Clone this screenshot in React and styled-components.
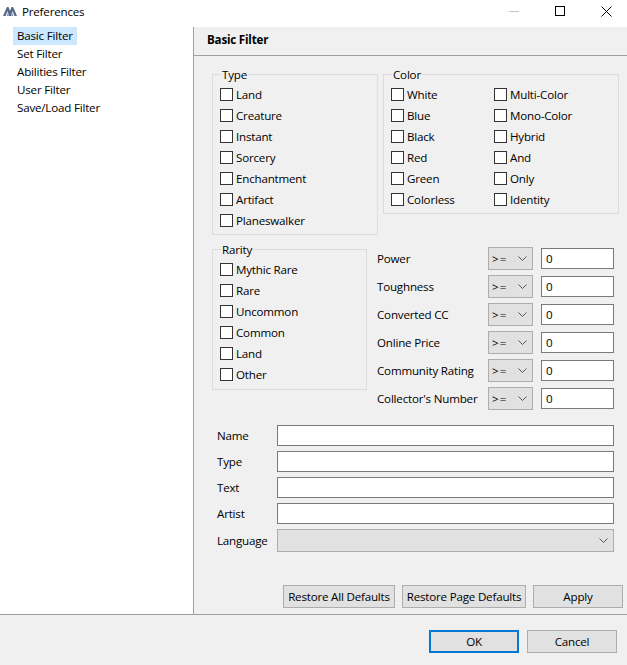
import React from "react";
import styled, { createGlobalStyle } from "styled-components";

const GlobalStyle = createGlobalStyle`
  html, body {
    margin: 0;
    padding: 0;
    background: #f0f0f0;
    overflow: hidden;
  }
  * {
    box-sizing: border-box;
  }
  body, input {
    font-family: "Open Sans", "Noto Sans", sans-serif;
    font-size: 11.6px;
    letter-spacing: -0.2px;
    color: #000;
  }
`;

const Window = styled.div`
  width: 627px;
  height: 665px;
  display: flex;
  flex-direction: column;
  overflow: hidden;
`;

const TitleBar = styled.div`
  height: 27px;
  flex: none;
  background: #fff;
  display: flex;
  align-items: flex-start;
  padding-left: 3px;
`;

const TitleText = styled.span`
  margin-left: 5px;
  line-height: 24px;
`;

const Logo = styled.svg`
  width: 14px;
  height: 9px;
  margin-top: 7px;
`;

const WindowControls = styled.div`
  margin-left: auto;
  margin-right: -2px;
  display: flex;
`;

const WindowButton = styled.div`
  width: 46px;
  height: 22px;
  display: flex;
  align-items: center;
  justify-content: center;
`;

const Main = styled.div`
  flex: 1;
  display: flex;
  min-height: 0;
`;

const Sidebar = styled.div`
  width: 194px;
  flex: none;
  background: #fff;
  border-right: 1px solid #a0a0a0;
  padding: 0 0 0 13px;
`;

const NavItem = styled.div`
  width: ${(p) => (p.$selected ? "64px" : "auto")};
  height: 18px;
  line-height: 17px;
  padding-left: 4px;
  background: ${(p) => (p.$selected ? "#cce8ff" : "transparent")};
  white-space: nowrap;
`;

const Panel = styled.div`
  flex: 1;
  display: flex;
  flex-direction: column;
  min-width: 0;
`;

const PanelTitle = styled.div`
  height: 29px;
  flex: none;
  border-bottom: 1px solid #a0a0a0;
  padding-left: 13px;
  font-weight: 700;
  line-height: 26px;
`;

const PanelBody = styled.div`
  flex: 1;
  padding: 9px 0 0 18px;
  display: flex;
  flex-direction: column;
`;

const TopRow = styled.div`
  display: flex;
  gap: 5px;
`;

const MiddleRow = styled.div`
  display: flex;
  gap: 10px;
  margin-top: 5px;
`;

const Group = styled.fieldset`
  margin: 0;
  padding: 1px 0 0 7px;
  width: ${(p) => p.$width}px;
  height: ${(p) => p.$height}px;
  border: 1px solid #dcdcdc;
`;

const GroupLegend = styled.legend`
  margin-left: 1px;
  padding: 0 1px;
  height: 18px;
  line-height: 20px;
`;

const GroupColumns = styled.div`
  display: grid;
  grid-template-columns: 103px 1fr;
`;

const CheckRow = styled.label`
  display: flex;
  align-items: center;
  gap: 3px;
  height: 21px;
  white-space: nowrap;
`;

const CheckBox = styled.input.attrs({ type: "checkbox" })`
  appearance: none;
  width: 13px;
  height: 13px;
  margin: 0;
  background: #fff;
  border: 1px solid #333;
`;

const Measures = styled.div`
  display: flex;
  flex-direction: column;
  gap: 5px;
  margin-top: 7px;
`;

const MeasureRow = styled.div`
  display: flex;
  align-items: center;
  height: 23px;
`;

const MeasureLabel = styled.span`
  width: 111px;
  white-space: nowrap;
`;

const Dropdown = styled.div`
  width: ${(p) => p.$width};
  height: 23px;
  flex: none;
  background: #e1e1e1;
  border: 1px solid #adadad;
  display: flex;
  align-items: center;
  justify-content: space-between;
  padding: 0 5px 0 3px;
`;

const Comparator = styled.span`
  letter-spacing: 1px;
`;

const TextField = styled.input`
  height: 21px;
  width: ${(p) => p.$width};
  flex: none;
  margin: 0;
  padding: 0 4px;
  background: #fff;
  border: 1px solid #7a7a7a;
  border-radius: 0;
  outline: none;
`;

const MeasureField = styled(TextField)`
  margin-left: 8px;
`;

const Details = styled.div`
  display: flex;
  flex-direction: column;
  margin-top: 12px;
  padding-left: 5px;
`;

const DetailRow = styled.div`
  display: flex;
  align-items: center;
  height: 26px;
  margin-top: ${(p) => (p.$nudge ? "1px" : "0")};
`;

const DetailLabel = styled.span`
  width: 60px;
`;

const ActionRow = styled.div`
  display: flex;
  gap: 7px;
  margin-top: auto;
  margin-bottom: 6px;
  padding-left: 71px;
`;

const Button = styled.div`
  width: ${(p) => p.$width}px;
  height: 23px;
  flex: none;
  background: #e1e1e1;
  border: ${(p) => (p.$primary ? "2px solid #0078d7" : "1px solid #adadad")};
  display: flex;
  align-items: center;
  justify-content: center;
  white-space: nowrap;
`;

const Footer = styled.div`
  height: 51px;
  flex: none;
  border-top: 1px solid #a0a0a0;
  display: flex;
  justify-content: flex-end;
  gap: 8px;
  padding: 15px 10px 0 0;
`;

const Chevron = () => (
  <svg width="9" height="5" viewBox="0 0 9 5" fill="none">
    <path d="M0.5 0.5 L4.5 4.5 L8.5 0.5" stroke="#555" strokeWidth="1" />
  </svg>
);

const navItems = ["Basic Filter", "Set Filter", "Abilities Filter", "User Filter", "Save/Load Filter"];
const typeItems = ["Land", "Creature", "Instant", "Sorcery", "Enchantment", "Artifact", "Planeswalker"];
const colorItems = ["White", "Multi-Color", "Blue", "Mono-Color", "Black", "Hybrid", "Red", "And", "Green", "Only", "Colorless", "Identity"];
const rarityItems = ["Mythic Rare", "Rare", "Uncommon", "Common", "Land", "Other"];
const measureItems = ["Power", "Toughness", "Converted CC", "Online Price", "Community Rating", "Collector's Number"];
const detailItems = ["Name", "Type", "Text", "Artist"];

const Check = ({ label }) => (
  <CheckRow>
    <CheckBox />
    {label}
  </CheckRow>
);

export default function App() {
  return (
    <Window>
      <GlobalStyle />
      <TitleBar>
        <Logo viewBox="0 0 14 9">
          <path d="M0 9 L3 2 L4 0 L5.5 0 L7 4 L8.5 0 L10 0 L11 2 L14 9 L11.5 9 L9.5 4 L8 9 L6 9 L4.5 4 L2.5 9 Z" fill="#56688a" />
          <path d="M3.5 9 L5 5 L6 9 Z M10.5 9 L9 5 L8 9 Z" fill="#8e9bb3" />
        </Logo>
        <TitleText>Preferences</TitleText>
        <WindowControls>
          <WindowButton>
            <svg width="10" height="1"><rect width="10" height="1" fill="#c4c4c4" /></svg>
          </WindowButton>
          <WindowButton>
            <svg width="10" height="10"><rect x="0.5" y="0.5" width="9" height="9" fill="none" stroke="#000" /></svg>
          </WindowButton>
          <WindowButton>
            <svg width="11" height="11"><path d="M0.5 0.5 L10.5 10.5 M10.5 0.5 L0.5 10.5" stroke="#000" /></svg>
          </WindowButton>
        </WindowControls>
      </TitleBar>
      <Main>
        <Sidebar>
          {navItems.map((item, i) => (
            <NavItem key={item} $selected={i === 0}>{item}</NavItem>
          ))}
        </Sidebar>
        <Panel>
          <PanelTitle>Basic Filter</PanelTitle>
          <PanelBody>
            <TopRow>
              <Group $width={166} $height={170}>
                <GroupLegend>Type</GroupLegend>
                {typeItems.map((item) => <Check key={item} label={item} />)}
              </Group>
              <Group $width={236} $height={149}>
                <GroupLegend>Color</GroupLegend>
                <GroupColumns>
                  {colorItems.map((item) => <Check key={item} label={item} />)}
                </GroupColumns>
              </Group>
            </TopRow>
            <MiddleRow>
              <Group $width={155} $height={150}>
                <GroupLegend>Rarity</GroupLegend>
                {rarityItems.map((item) => <Check key={item} label={item} />)}
              </Group>
              <Measures>
                {measureItems.map((item) => (
                  <MeasureRow key={item}>
                    <MeasureLabel>{item}</MeasureLabel>
                    <Dropdown $width="45px">
                      <Comparator>&gt;=</Comparator>
                      <Chevron />
                    </Dropdown>
                    <MeasureField $width="73px" defaultValue="0" />
                  </MeasureRow>
                ))}
              </Measures>
            </MiddleRow>
            <Details>
              {detailItems.map((item) => (
                <DetailRow key={item}>
                  <DetailLabel>{item}</DetailLabel>
                  <TextField $width="337px" />
                </DetailRow>
              ))}
              <DetailRow $nudge>
                <DetailLabel>Language</DetailLabel>
                <Dropdown $width="337px">
                  <span />
                  <Chevron />
                </Dropdown>
              </DetailRow>
            </Details>
            <ActionRow>
              <Button $width={112}>Restore All Defaults</Button>
              <Button $width={124}>Restore Page Defaults</Button>
              <Button $width={90}>Apply</Button>
            </ActionRow>
          </PanelBody>
        </Panel>
      </Main>
      <Footer>
        <Button $width={90} $primary>OK</Button>
        <Button $width={90}>Cancel</Button>
      </Footer>
    </Window>
  );
}
